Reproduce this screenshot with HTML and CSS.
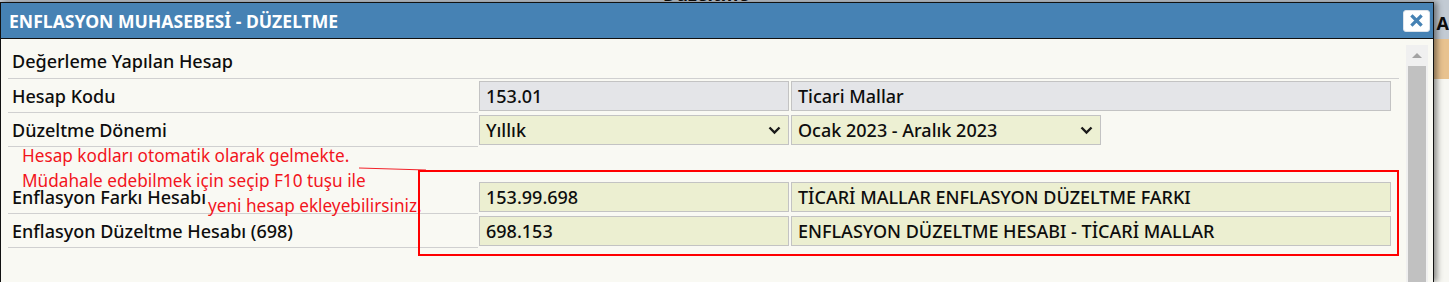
FILE: index.html
```html
<!DOCTYPE html>
<html lang="tr">
<head>
    <meta charset="UTF-8">
    <meta name="viewport" content="width=device-width, initial-scale=1.0">
    <title>Enflasyon Muhasebesi - Düzeltme</title>
    <link rel="stylesheet" href="styles.css">
</head>
<body>
    <div class="backdrop">
        <div class="page-header">
            <h2 class="page-title">Düzeltme</h2>
            <span class="page-action">A</span>
        </div>
        <div class="page-band"></div>
    </div>

    <div class="dialog">
        <div class="dialog-title">
            <span>ENFLASYON MUHASEBESİ - DÜZELTME</span>
            <button class="close-btn" type="button" aria-label="Kapat">
                <svg width="13" height="13" viewBox="0 0 13 13">
                    <path d="M2.5 2.5 L10.5 10.5 M10.5 2.5 L2.5 10.5" stroke="#4682b4" stroke-width="3.2" stroke-linecap="square"/>
                </svg>
            </button>
        </div>

        <div class="dialog-body">
            <div class="form">
                <div class="section-row">Değerleme Yapılan Hesap</div>

                <div class="form-row">
                    <div class="label">Hesap Kodu</div>
                    <div class="cell"><div class="field readonly">153.01</div></div>
                    <div class="cell"><div class="field readonly">Ticari Mallar</div></div>
                </div>

                <div class="form-row">
                    <div class="label">Düzeltme Dönemi</div>
                    <div class="cell">
                        <div class="field select">
                            <span>Yıllık</span>
                            <svg class="chevron" width="13" height="9" viewBox="0 0 13 9"><path d="M1.5 1.5 L6.5 6.5 L11.5 1.5" fill="none" stroke="#1a1a1a" stroke-width="2.4"/></svg>
                        </div>
                    </div>
                    <div class="cell">
                        <div class="field select short">
                            <span>Ocak 2023 - Aralık 2023</span>
                            <svg class="chevron" width="13" height="9" viewBox="0 0 13 9"><path d="M1.5 1.5 L6.5 6.5 L11.5 1.5" fill="none" stroke="#1a1a1a" stroke-width="2.4"/></svg>
                        </div>
                    </div>
                </div>

                <div class="spacer-row"></div>

                <div class="form-row">
                    <div class="label">Enflasyon Farkı Hesabı</div>
                    <div class="cell"><div class="field">153.99.698</div></div>
                    <div class="cell"><div class="field">TİCARİ MALLAR ENFLASYON DÜZELTME FARKI</div></div>
                </div>

                <div class="form-row">
                    <div class="label">Enflasyon Düzeltme Hesabı (698)</div>
                    <div class="cell"><div class="field">698.153</div></div>
                    <div class="cell"><div class="field">ENFLASYON DÜZELTME HESABI - TİCARİ MALLAR</div></div>
                </div>
            </div>

            <div class="scrollbar">
                <div class="scroll-arrow"></div>
                <div class="scroll-thumb"></div>
            </div>
        </div>
    </div>

    <!-- annotation drawn over the screenshot -->
    <div class="note">
        <div>Hesap kodları otomatik olarak gelmekte.</div>
        <div>Müdahale edebilmek için seçip F10 tuşu ile</div>
        <div class="note-indent">yeni hesap ekleyebilirsiniz.</div>
    </div>
    <svg class="note-line" width="70" height="6" viewBox="0 0 70 6">
        <line x1="0" y1="1" x2="67" y2="3" stroke="#f2222a" stroke-width="1"/>
    </svg>
    <div class="note-box"></div>
</body>
</html>
```

FILE: styles.css
```css
body {
    margin: 0;
    font-family: "Noto Sans", sans-serif;
    color: #0d0d0d;
    background-color: #f7f7f2;
    overflow: hidden;
    height: 282px;
}

.backdrop {
    display: flex;
    flex-direction: column;
}

.page-header {
    display: flex;
    align-items: flex-start;
    height: 39px;
    background-color: #c2cad3;
}

.page-title {
    margin: -15px 0 0 663px;
    font-size: 18px;
    font-weight: bold;
    line-height: 18px;
}

.page-action {
    margin-left: auto;
    padding-top: 13px;
    font-size: 18px;
    font-weight: bold;
    line-height: 20px;
}

.page-band {
    height: 40px;
    background-color: #e8c28f;
}

.dialog {
    position: absolute;
    left: 0;
    top: 2px;
    width: 1434px;
    height: 280px;
    box-sizing: border-box;
    border: 1px solid #111;
    border-bottom: none;
    background-color: #f9f9f3;
    box-shadow: 3px 0 6px rgba(0, 0, 0, 0.45);
    overflow: hidden;
}

.dialog-title {
    display: flex;
    align-items: center;
    justify-content: space-between;
    height: 35px;
    padding: 0 3px 0 8px;
    background-color: #4682b4;
    border-bottom: 1px solid #111;
    color: #fff;
    font-size: 17.6px;
    font-weight: bold;
}

.close-btn {
    display: flex;
    align-items: center;
    justify-content: center;
    width: 27px;
    height: 22px;
    padding: 0;
    background-color: #fff;
    border: 1px solid #dde3ea;
    border-radius: 3px;
}

.dialog-body {
    display: flex;
    padding-left: 7px;
}

.form {
    width: 1391px;
}

.section-row {
    display: flex;
    align-items: center;
    height: 40px;
    box-sizing: border-box;
    padding: 4px 0 0 4px;
    border-bottom: 1px solid #d0d0d0;
    font-size: 18px;
    font-weight: 500;
}

.form-row {
    display: grid;
    grid-template-columns: 470px 312px 602px;
    height: 34px;
    font-size: 18px;
    font-weight: 500;
}

.label {
    display: flex;
    align-items: center;
    padding-left: 4px;
    border-bottom: 1px solid #d0d0d0;
}

.cell {
    padding: 2px 1px;
}

.field {
    display: flex;
    align-items: center;
    height: 30px;
    box-sizing: border-box;
    padding: 0 6px;
    border: 1px solid #c3c3c3;
    background-color: #ecefd1;
    white-space: nowrap;
}

.field.readonly {
    background-color: #e4e5e8;
}

.field.select {
    justify-content: space-between;
    padding-right: 7px;
    background-color: #edf0d3;
}

.field.short {
    width: 310px;
}

.spacer-row {
    height: 33px;
}

.scrollbar {
    display: flex;
    flex-direction: column;
    align-items: center;
    width: 22px;
    height: 260px;
    margin: 6px 0 0 7px;
    background-color: #f0f0f0;
}

.scroll-arrow {
    margin-top: 8px;
    border-left: 5px solid transparent;
    border-right: 5px solid transparent;
    border-bottom: 5px solid #a3a3a3;
}

.scroll-thumb {
    width: 18px;
    flex: 1;
    margin-top: 8px;
    background-color: #c1c1c1;
}

.note {
    position: absolute;
    left: 22px;
    top: 143px;
    color: #f2141c;
    font-size: 17.2px;
    line-height: 25px;
    white-space: nowrap;
}

.note-indent {
    padding-left: 186px;
}

.note-line {
    position: absolute;
    left: 359px;
    top: 167px;
}

.note-box {
    position: absolute;
    left: 418px;
    top: 170px;
    width: 981px;
    height: 86px;
    box-sizing: border-box;
    border: 2px solid #f00;
}
```
